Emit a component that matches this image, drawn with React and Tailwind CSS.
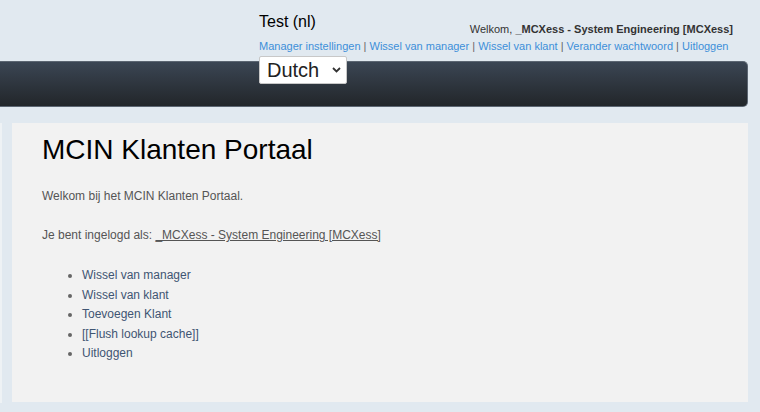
import React from 'react';

const topLinks = [
  'Manager instellingen',
  'Wissel van manager',
  'Wissel van klant',
  'Verander wachtwoord',
  'Uitloggen',
];

const menuItems = [
  'Wissel van manager',
  'Wissel van klant',
  'Toevoegen Klant',
  '[[Flush lookup cache]]',
  'Uitloggen',
];

const App = () => {
  return (
    <div
      className="relative h-[412px] w-[760px] overflow-hidden bg-[#e1e9f0]"
      style={{ fontFamily: '"Liberation Sans", Arial, sans-serif' }}
    >
      {/* header */}
      <div className="relative h-[61px] pl-[259px] pr-[27px] pt-[11px]">
        <div className="flex items-start justify-between">
          <div className="mt-[2px] text-[16px] leading-[18px] text-black">Test (nl)</div>
          <div className="mt-[12px] text-[11px] leading-[13px] text-[#333]">
            Welkom, <span className="font-bold">_MCXess - System Engineering [MCXess]</span>
          </div>
        </div>
        <div className="mt-[4px] text-[11px] leading-[13px] text-[#666]">
          {topLinks.map((link, i) => (
            <React.Fragment key={link}>
              {i > 0 && <span> | </span>}
              <a href="#" className="text-[#3d8fd9]">{link}</a>
            </React.Fragment>
          ))}
        </div>

        <div className="absolute left-[259px] top-[56px] z-10 h-[28px] w-[88px]">
          <select
            defaultValue="nl"
            className="h-full w-full appearance-none rounded-[2px] border border-[#c8c8c8] bg-white pl-[7px] text-[20px] leading-[26px] text-[#222] outline-none"
            style={{ fontFamily: '"Liberation Sans", Arial, sans-serif' }}
          >
            <option value="nl">Dutch</option>
            <option value="en">English</option>
          </select>
          <svg
            className="pointer-events-none absolute right-[6px] top-[11px]"
            width="9"
            height="6"
            viewBox="0 0 9 6"
          >
            <path d="M1 1 L4.5 4.5 L8 1" fill="none" stroke="#333" strokeWidth="1.8" />
          </svg>
        </div>
      </div>

      {/* dark bar */}
      <div className="h-[46px] w-[748px] rounded-r-[5px] border border-l-0 border-[#5c6672] bg-gradient-to-b from-[#3b4654] to-[#22262a]" />

      {/* content */}
      <div className="mt-[16px] flex">
        <div className="h-[280px] w-[2px] bg-[#eef2f5]" />
        <div className="ml-[10px] h-[279px] w-[736px] bg-[#f2f2f2] pl-[30px] pt-[10px]">
          <h1 className="text-[28px] leading-[34px] text-black">MCIN Klanten Portaal</h1>
          <p className="mt-[20px] text-[12px] leading-[18px] text-[#555]">
            Welkom bij het MCIN Klanten Portaal.
          </p>
          <p className="mt-[21px] text-[12px] leading-[18px] text-[#555]">
            Je bent ingelogd als:{' '}
            <a href="#" className="text-[#555] underline">
              {' '}_MCXess - System Engineering [MCXess]
            </a>
          </p>
          <ul className="mt-[22px] list-disc pl-[40px] text-[12px] leading-[19.5px] text-[#666]">
            {menuItems.map((item) => (
              <li key={item}>
                <a href="#" className="text-[#3f5573]">{item}</a>
              </li>
            ))}
          </ul>
        </div>
      </div>
    </div>
  );
};

export default App;
